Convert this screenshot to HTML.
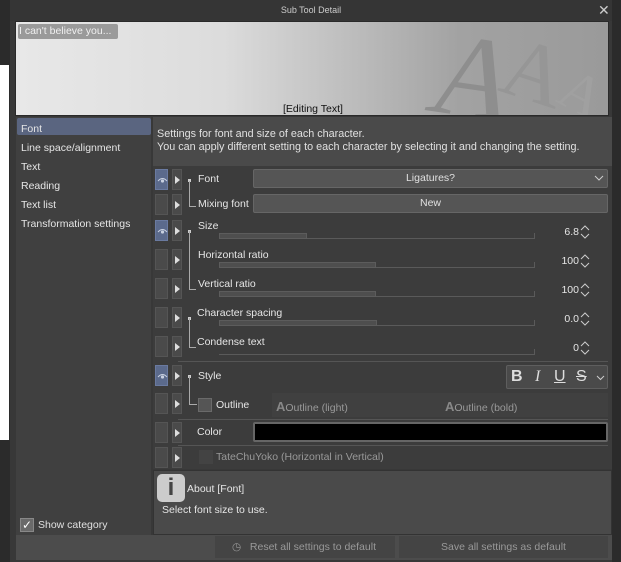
<!DOCTYPE html><html><head><meta charset="utf-8"><style>
*{box-sizing:border-box;margin:0;padding:0}
body{width:621px;height:562px;background:#2b2b2b;font-family:"Liberation Sans",sans-serif;font-size:10.5px;color:#e0e0e0;position:relative;overflow:hidden}
.a{position:absolute}
.eye{position:absolute;left:155px;width:13px;height:21px;background:#4a4a4a;border:1px solid #555}
.eye.on{background:#5b6a8c;border-color:#6a7aa0}
.eye svg{position:absolute;left:1px;top:6px}
.arr{position:absolute;left:172px;width:10px;height:21px;background:#4a4a4a;border:1px solid #555}
.arr:after{content:"";position:absolute;left:2px;top:6px;border-left:5px solid #ddd;border-top:4px solid transparent;border-bottom:4px solid transparent}
.lbl{position:absolute;color:#e6e6e6;font-size:10.5px}
.tr{position:absolute;left:219px;width:316px;height:6px;border-bottom:1px solid #5a5a5a;border-right:1px solid #5a5a5a}
.fill{position:absolute;left:0;top:0;height:6px;background:#4e4e4e;border:1px solid #5c5c5c}
.val{position:absolute;right:42px;color:#e6e6e6;font-size:10.5px;text-align:right}
.sp{position:absolute;left:580px}
.sep{position:absolute;left:178px;width:430px;height:1px;background:#555}
.vl{position:absolute;left:189px;width:1px;background:#aaa}
.hl{position:absolute;height:1px;background:#aaa}
.dot{position:absolute;left:188px;width:3px;height:3px;background:#ccc}
</style></head><body>
<div class="a" style="left:0;top:65px;width:9px;height:375px;background:#fff"></div>
<div class="a" style="left:10px;top:0;width:602px;height:562px;background:#383838"></div>
<div class="a" style="left:10px;top:0;width:602px;height:21px;background:#353535;text-align:center;line-height:21px;font-size:9px;color:#ccc">Sub Tool Detail</div>
<div class="a" style="left:598px;top:2px;font-size:14px;color:#ccc">✕</div>
<div class="a" style="left:15px;top:21px;width:594px;height:95px;border:1px solid #2a2a2a;background:linear-gradient(90deg,#e8e8e8 0%,#dcdcdc 35%,#b8b8b8 60%,#a2a2a2 75%,#9a9a9a 100%);overflow:hidden">
<div class="a" style="left:418px;top:-12px;font-family:'Liberation Serif',serif;font-size:118px;color:#8e8e8e;transform:rotate(8deg) skewX(-8deg)">A</div>
<div class="a" style="left:488px;top:0px;font-family:'Liberation Serif',serif;font-size:86px;color:#969696;transform:rotate(18deg)">A</div>
<div class="a" style="left:545px;top:38px;font-family:'Liberation Serif',serif;font-size:58px;color:#a0a0a0;transform:rotate(28deg)">A</div>
<div class="a" style="left:2px;top:2px;width:100px;height:15px;background:#9a9a9a;border-radius:2px;color:#f0f0f0;font-size:10.5px;line-height:15px;padding-left:1px">I can't believe you...</div>
<div class="a" style="left:267px;top:81px;color:#111;font-size:10.5px">[Editing Text]</div>
</div>
<div class="a" style="left:16px;top:117px;width:135px;height:418px;background:#404040"></div>
<div class="a" style="left:17px;top:118px;width:134px;height:17px;background:#5a6580;border-radius:2px"></div>
<div class="a" style="left:21px;top:120px;line-height:19px;font-size:10.5px;color:#e6e6e6">Font<br>Line space/alignment<br>Text<br>Reading<br>Text list<br>Transformation settings</div>
<div class="a" style="left:20px;top:518px;width:14px;height:14px;background:#6a6a6a;border:1px solid #888;color:#fff;font-size:12px;line-height:12px;text-align:center">✓</div>
<div class="a" style="left:38px;top:519px">Show category</div>
<div class="a" style="left:16px;top:535px;width:596px;height:25px;background:#4c4c4c"></div>
<div class="a" style="left:153px;top:117px;width:459px;height:49px;background:#4a4a4a"></div>
<div class="a" style="left:157px;top:128px;line-height:13px;font-size:10.8px">Settings for font and size of each character.<br>You can apply different setting to each character by selecting it and changing the setting.</div>
<div class="a" style="left:153px;top:166px;width:459px;height:303px;background:#3c3c3c"></div>

<div class="eye on" style="top:169px"><svg width="11" height="8"><path d="M1 5 Q5.5 0 10 5" fill="none" stroke="#c8d0e0"/><circle cx="5.5" cy="5" r="1.6" fill="#c8d0e0"/></svg></div><div class="arr" style="top:169px"></div>
<div class="eye" style="top:194px"></div><div class="arr" style="top:194px"></div>
<div class="dot" style="top:179px"></div>
<div class="vl" style="top:181px;height:25px"></div><div class="hl" style="left:189px;top:206px;width:7px"></div>
<div class="lbl" style="left:198px;top:173px">Font</div>
<div class="lbl" style="left:198px;top:198px">Mixing font</div>
<div class="a" style="left:253px;top:169px;width:355px;height:19px;background:#555;border:1px solid #666;border-radius:2px;text-align:center;line-height:17px">Ligatures?</div>
<svg class="a" style="left:594px;top:175px" width="10" height="6"><path d="M1 1 L5 5 L9 1" fill="none" stroke="#ccc"/></svg>
<div class="a" style="left:253px;top:194px;width:355px;height:19px;background:#555;border:1px solid #666;border-radius:2px;text-align:center;line-height:17px">New</div>

<div class="eye on" style="top:220px"><svg width="11" height="8"><path d="M1 5 Q5.5 0 10 5" fill="none" stroke="#c8d0e0"/><circle cx="5.5" cy="5" r="1.6" fill="#c8d0e0"/></svg></div><div class="arr" style="top:220px"></div>
<div class="eye" style="top:249px"></div><div class="arr" style="top:249px"></div>
<div class="eye" style="top:278px"></div><div class="arr" style="top:278px"></div>
<div class="eye" style="top:307px"></div><div class="arr" style="top:307px"></div>
<div class="eye" style="top:336px"></div><div class="arr" style="top:336px"></div>
<div class="dot" style="top:230px"></div>
<div class="vl" style="top:231px;height:58px"></div><div class="hl" style="left:189px;top:289px;width:7px"></div>
<div class="dot" style="top:317px"></div>
<div class="vl" style="top:318px;height:29px"></div><div class="hl" style="left:189px;top:347px;width:7px"></div>
<div class="lbl" style="left:198px;top:220px">Size</div>
<div class="lbl" style="left:198px;top:249px">Horizontal ratio</div>
<div class="lbl" style="left:198px;top:278px">Vertical ratio</div>
<div class="lbl" style="left:197px;top:307px">Character spacing</div>
<div class="lbl" style="left:197px;top:336px">Condense text</div>
<div class="tr" style="top:233px"><div class="fill" style="width:88px"></div></div>
<div class="tr" style="top:262px"><div class="fill" style="width:157px"></div></div>
<div class="tr" style="top:291px"><div class="fill" style="width:157px"></div></div>
<div class="tr" style="top:320px"><div class="fill" style="width:158px"></div></div>
<div class="tr" style="top:349px"></div>
<div class="val" style="top:226px">6.8</div>
<div class="val" style="top:255px">100</div>
<div class="val" style="top:284px">100</div>
<div class="val" style="top:313px">0.0</div>
<div class="val" style="top:342px">0</div>
<svg class="sp" style="top:224px" width="10" height="16"><path d="M1 6 L5 2 L9 6 M1 10 L5 14 L9 10" fill="none" stroke="#ccc"/></svg>
<svg class="sp" style="top:253px" width="10" height="16"><path d="M1 6 L5 2 L9 6 M1 10 L5 14 L9 10" fill="none" stroke="#ccc"/></svg>
<svg class="sp" style="top:282px" width="10" height="16"><path d="M1 6 L5 2 L9 6 M1 10 L5 14 L9 10" fill="none" stroke="#ccc"/></svg>
<svg class="sp" style="top:311px" width="10" height="16"><path d="M1 6 L5 2 L9 6 M1 10 L5 14 L9 10" fill="none" stroke="#ccc"/></svg>
<svg class="sp" style="top:340px" width="10" height="16"><path d="M1 6 L5 2 L9 6 M1 10 L5 14 L9 10" fill="none" stroke="#ccc"/></svg>
<div class="sep" style="top:361px"></div>

<div class="eye on" style="top:365px"><svg width="11" height="8"><path d="M1 5 Q5.5 0 10 5" fill="none" stroke="#c8d0e0"/><circle cx="5.5" cy="5" r="1.6" fill="#c8d0e0"/></svg></div><div class="arr" style="top:365px"></div>
<div class="eye" style="top:393px"></div><div class="arr" style="top:393px"></div>
<div class="dot" style="top:375px"></div>
<div class="vl" style="top:376px;height:28px"></div><div class="hl" style="left:189px;top:404px;width:8px"></div>
<div class="lbl" style="left:198px;top:370px">Style</div>
<div class="a" style="left:506px;top:365px;width:102px;height:24px;background:#4a4a4a;border:1px solid #5e5e5e;border-radius:2px;color:#ddd;font-size:16px;line-height:22px">
<b class="a" style="left:4px">B</b><i class="a" style="left:28px;font-family:'Liberation Serif',serif">I</i><u class="a" style="left:47px">U</u><s class="a" style="left:69px">S</s>
<svg class="a" style="left:89px;top:9px" width="9" height="6"><path d="M1 1 L4.5 4.5 L8 1" fill="none" stroke="#ccc"/></svg></div>
<div class="a" style="left:272px;top:393px;width:336px;height:24px;background:#404040"></div>
<div class="a" style="left:198px;top:398px;width:14px;height:14px;background:#555;border:1px solid #6a6a6a"></div>
<div class="lbl" style="left:216px;top:399px">Outline</div>
<div class="lbl" style="left:276px;top:399px;color:#999"><b style="font-size:13px;color:#888">A</b>Outline (light)</div>
<div class="lbl" style="left:445px;top:399px;color:#999"><b style="font-size:13px;color:#888">A</b>Outline (bold)</div>
<div class="sep" style="top:419px"></div>
<div class="eye" style="top:422px"></div><div class="arr" style="top:422px"></div>
<div class="lbl" style="left:197px;top:426px">Color</div>
<div class="a" style="left:253px;top:422px;width:355px;height:20px;background:#000;border:2px solid #666;border-radius:2px"></div>
<div class="sep" style="top:445px"></div>
<div class="eye" style="top:447px"></div><div class="arr" style="top:447px"></div>
<div class="a" style="left:199px;top:450px;width:14px;height:14px;background:#434343"></div>
<div class="lbl" style="left:216px;top:451px;color:#999">TateChuYoko (Horizontal in Vertical)</div>

<div class="a" style="left:153px;top:470px;width:459px;height:65px;background:#4a4a4a;border:1px solid #333"></div>
<div class="a" style="left:157px;top:474px;width:28px;height:28px;background:#ccc;border-radius:5px;color:#444;font-weight:bold;font-size:24px;text-align:center;line-height:28px">i</div>
<div class="lbl" style="left:187px;top:483px">About [Font]</div>
<div class="lbl" style="left:162px;top:504px">Select font size to use.</div>
<div class="a" style="left:215px;top:536px;width:180px;height:22px;background:#444;color:#999;line-height:22px;padding-left:17px">◷ &nbsp;&nbsp;Reset all settings to default</div>
<div class="a" style="left:399px;top:536px;width:209px;height:22px;background:#444;color:#999;line-height:22px;text-align:center">Save all settings as default</div>
</body></html>
